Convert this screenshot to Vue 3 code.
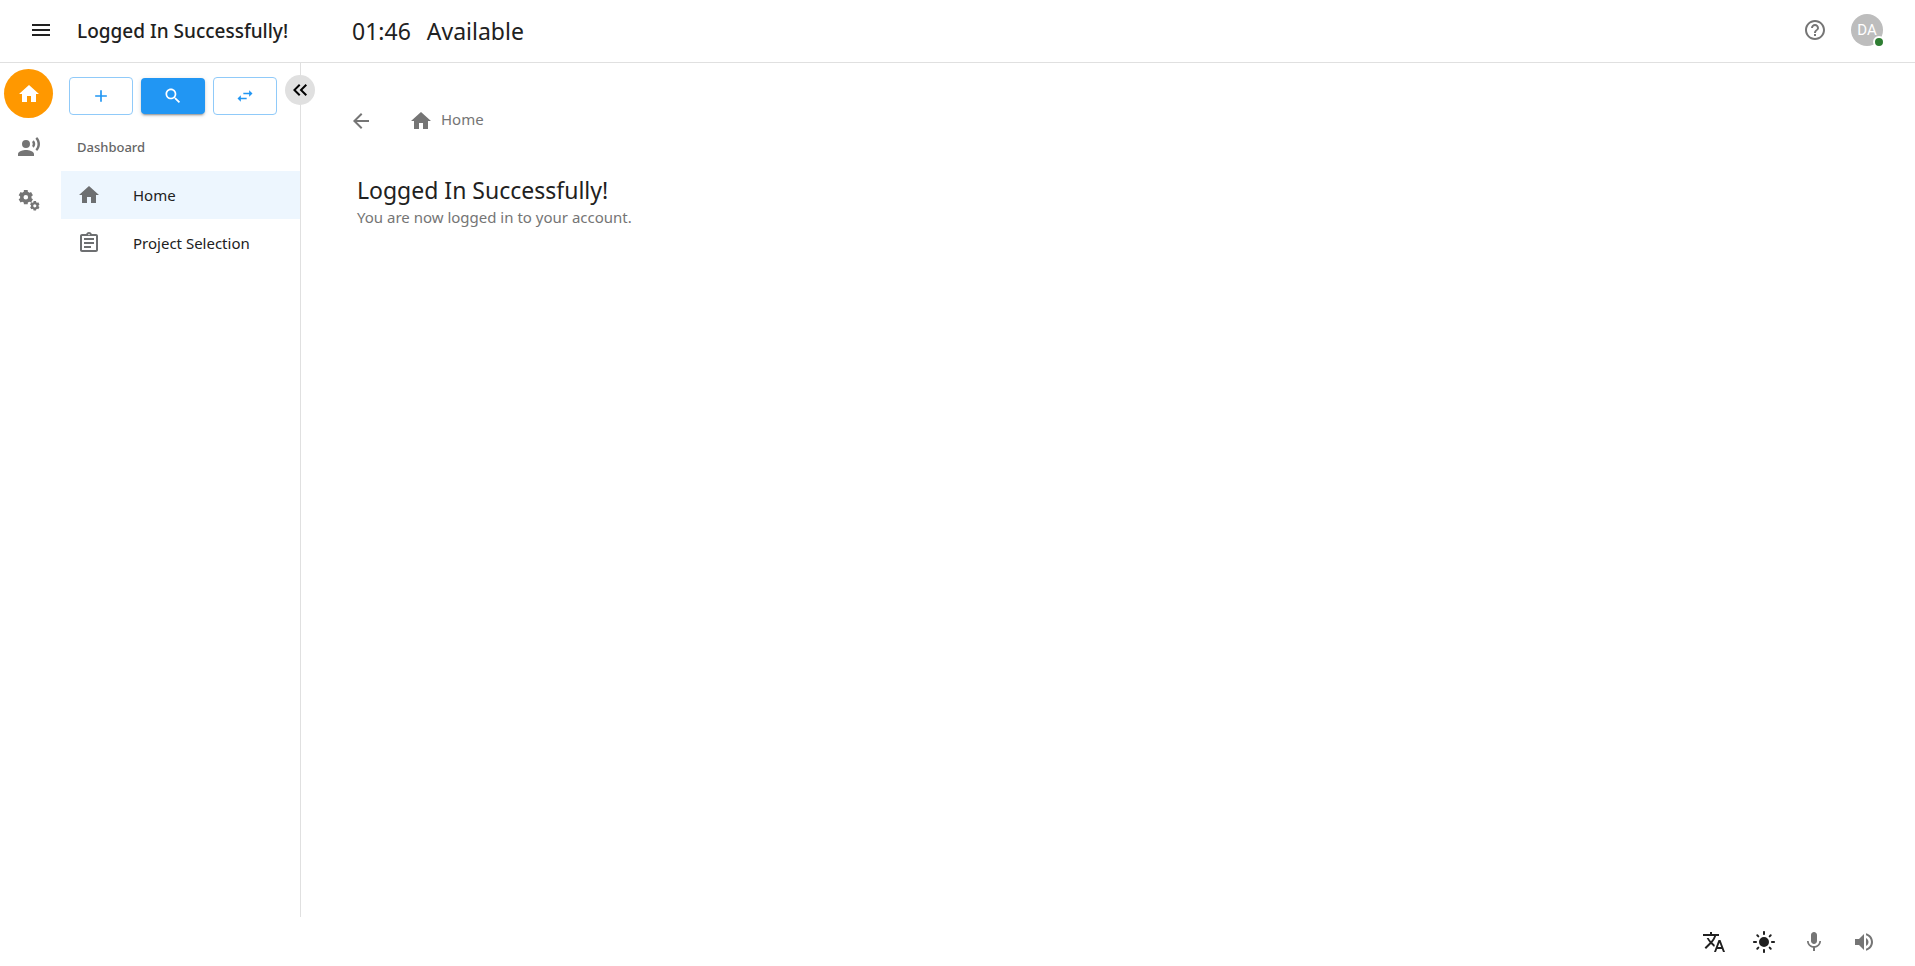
<template>
  <div class="app">
    <header class="topbar">
      <button class="icon-btn" type="button" aria-label="Toggle menu">
        <svg class="icon" viewBox="0 0 24 24"><path :d="icons.menu" /></svg>
      </button>
      <h1 class="title">Logged In Successfully!</h1>
      <div class="status">
        <span>01:46</span>
        <span>Available</span>
      </div>
      <button class="icon-btn muted" type="button" aria-label="Help">
        <svg class="icon" viewBox="0 0 24 24"><path :d="icons.help" /></svg>
      </button>
      <button class="avatar" type="button" aria-label="Account">
        DA
        <span class="badge"></span>
      </button>
    </header>

    <div class="body">
      <nav class="rail">
        <button
          v-for="item in railItems"
          :key="item.label"
          class="rail-btn"
          :class="{ active: activeRail === item.label }"
          type="button"
          :aria-label="item.label"
          @click="activeRail = item.label"
        >
          <svg class="icon" viewBox="0 0 24 24"><path fill-rule="evenodd" :d="icons[item.icon]" /></svg>
        </button>
      </nav>

      <aside class="sidebar">
        <div class="actions">
          <button class="action" type="button" aria-label="Add">
            <svg class="icon small" viewBox="0 0 24 24"><path :d="icons.add" /></svg>
          </button>
          <button class="action contained" type="button" aria-label="Search">
            <svg class="icon small" viewBox="0 0 24 24"><path :d="icons.search" /></svg>
          </button>
          <button class="action" type="button" aria-label="Switch">
            <svg class="icon small" viewBox="0 0 24 24"><path :d="icons.swap" /></svg>
          </button>
        </div>
        <h2 class="group">Dashboard</h2>
        <ul class="menu">
          <li v-for="item in menuItems" :key="item.label">
            <a href="#" class="menu-link" :class="{ selected: item.selected }">
              <svg class="icon" viewBox="0 0 24 24"><path :d="icons[item.icon]" /></svg>
              {{ item.label }}
            </a>
          </li>
        </ul>
        <button class="collapse" type="button" aria-label="Collapse sidebar">
          <svg class="icon" viewBox="0 0 24 24"><path :d="icons.collapse" /></svg>
        </button>
      </aside>

      <main class="content">
        <div class="breadcrumbs">
          <button class="icon-btn muted" type="button" aria-label="Back">
            <svg class="icon" viewBox="0 0 24 24"><path :d="icons.back" /></svg>
          </button>
          <a href="#" class="crumb">
            <svg class="icon" viewBox="0 0 24 24"><path :d="icons.home" /></svg>
            <span>Home</span>
          </a>
        </div>
        <section class="message">
          <h2>Logged In Successfully!</h2>
          <p>You are now logged in to your account.</p>
        </section>
      </main>
    </div>

    <footer class="footer">
      <button
        v-for="item in footerItems"
        :key="item.label"
        class="icon-btn"
        :class="{ muted: item.muted }"
        type="button"
        :aria-label="item.label"
      >
        <svg class="icon" viewBox="0 0 24 24"><path :d="icons[item.icon]" /></svg>
      </button>
    </footer>
  </div>
</template>

<script setup>
import { ref } from 'vue'

const activeRail = ref('Home')

// builds the outline of a gear with a round hole
const gear = (cx, cy, r, hole) => {
  const teeth = 6
  const step = (Math.PI * 2) / teeth
  const points = []
  for (let i = 0; i < teeth; i++) {
    const a = i * step - Math.PI / 2
    const corners = [[-0.36, r * 0.78], [-0.26, r], [0.26, r], [0.36, r * 0.78]]
    corners.forEach(([offset, radius]) => {
      points.push(`${(cx + radius * Math.cos(a + offset)).toFixed(2)} ${(cy + radius * Math.sin(a + offset)).toFixed(2)}`)
    })
  }
  return `M${points.join('L')}Z M${cx - hole} ${cy}a${hole} ${hole} 0 1 0 ${hole * 2} 0a${hole} ${hole} 0 1 0 ${-hole * 2} 0Z`
}

const icons = {
  menu: 'M3 18h18v-2H3v2zm0-5h18v-2H3v2zm0-7v2h18V6H3z',
  help: 'M11 18h2v-2h-2v2zm1-16C6.48 2 2 6.48 2 12s4.48 10 10 10 10-4.48 10-10S17.52 2 12 2zm0 18c-4.41 0-8-3.59-8-8s3.59-8 8-8 8 3.59 8 8-3.59 8-8 8zm0-14c-2.21 0-4 1.79-4 4h2c0-1.1.9-2 2-2s2 .9 2 2c0 2-3 1.75-3 5h2c0-2.25 3-2.5 3-5 0-2.21-1.79-4-4-4z',
  home: 'M10 20v-6h4v6h5v-8h3L12 3 2 12h3v8z',
  voice: 'M9 5a4 4 0 1 0 0 8 4 4 0 0 0 0-8zM9 15c-2.67 0-8 1.34-8 4v2h16v-2c0-2.66-5.33-4-8-4zM16.76 5.36l-1.68 1.69c.84 1.18.84 2.71 0 3.89l1.68 1.69c2.02-2.02 2.02-5.07 0-7.27zM20.07 2l-1.63 1.63c2.77 3.02 2.77 7.56 0 10.74L20.07 16c3.9-3.89 3.91-9.95 0-14z',
  gears: gear(8.8, 9.2, 7.4, 2.3) + gear(17.8, 17.8, 4.9, 1.6),
  add: 'M19 13h-6v6h-2v-6H5v-2h6V5h2v6h6v2z',
  search: 'M15.5 14h-.79l-.28-.27C15.41 12.59 16 11.11 16 9.5 16 5.91 13.09 3 9.5 3S3 5.91 3 9.5 5.91 16 9.5 16c1.61 0 3.09-.59 4.23-1.57l.27.28v.79l5 4.99L20.49 19l-4.99-5zm-6 0C7.01 14 5 11.99 5 9.5S7.01 5 9.5 5 14 7.01 14 9.5 11.99 14 9.5 14z',
  swap: 'M6.99 11 3 15l3.99 4v-3H14v-2H6.99v-3zM21 9l-3.99-4v3H10v2h7.01v3L21 9z',
  collapse: 'M17.59 18 19 16.59 14.42 12 19 7.41 17.59 6l-6 6zM11 18l1.41-1.41L7.83 12l4.58-4.59L11 6l-6 6z',
  project: 'M7 15h7v2H7zm0-4h10v2H7zm0-4h10v2H7zm12-4h-4.18C14.4 1.84 13.3 1 12 1c-1.3 0-2.4.84-2.82 2H5c-1.1 0-2 .9-2 2v14c0 1.1.9 2 2 2h14c1.1 0 2-.9 2-2V5c0-1.1-.9-2-2-2zm-7-.25c.41 0 .75.34.75.75s-.34.75-.75.75-.75-.34-.75-.75.34-.75.75-.75zM19 19H5V5h14v14z',
  back: 'M20 11H7.83l5.59-5.59L12 4l-8 8 8 8 1.41-1.41L7.83 13H20v-2z',
  translate: 'm12.87 15.07-2.54-2.51.03-.03c1.74-1.94 2.98-4.17 3.71-6.53H17V4h-7V2H8v2H1v1.99h11.17C11.5 7.92 10.44 9.75 9 11.35 8.07 10.32 7.3 9.19 6.69 8h-2c.73 1.63 1.73 3.17 2.98 4.56l-5.09 5.02L4 19l5-5 3.11 3.11.76-2.04zM18.5 10h-2L12 22h2l1.12-3h4.75L21 22h2l-4.5-12zm-2.62 7 1.62-4.33L19.12 17h-3.24z',
  sun: 'M12 7a5 5 0 1 0 0 10 5 5 0 0 0 0-10zM2 13h2c.55 0 1-.45 1-1s-.45-1-1-1H2c-.55 0-1 .45-1 1s.45 1 1 1zm18 0h2c.55 0 1-.45 1-1s-.45-1-1-1h-2c-.55 0-1 .45-1 1s.45 1 1 1zM11 2v2c0 .55.45 1 1 1s1-.45 1-1V2c0-.55-.45-1-1-1s-1 .45-1 1zm0 18v2c0 .55.45 1 1 1s1-.45 1-1v-2c0-.55-.45-1-1-1s-1 .45-1 1zM5.99 4.58a.996.996 0 0 0-1.41 1.41l1.06 1.06a.996.996 0 1 0 1.41-1.41L5.99 4.58zm12.37 12.37a.996.996 0 0 0-1.41 1.41l1.06 1.06a.996.996 0 1 0 1.41-1.41l-1.06-1.06zm1.06-10.96a.996.996 0 1 0-1.41-1.41l-1.06 1.06a.996.996 0 1 0 1.41 1.41l1.06-1.06zM7.05 18.36a.996.996 0 1 0-1.41-1.41l-1.06 1.06a.996.996 0 1 0 1.41 1.41l1.06-1.06z',
  mic: 'M12 14c1.66 0 2.99-1.34 2.99-3L15 5c0-1.66-1.34-3-3-3S9 3.34 9 5v6c0 1.66 1.34 3 3 3zm5.3-3c0 3-2.54 5.1-5.3 5.1S6.7 14 6.7 11H5c0 3.41 2.72 6.23 6 6.72V21h2v-3.28c3.28-.48 6-3.3 6-6.72h-1.7z',
  volume: 'M3 9v6h4l5 5V4L7 9H3zm13.5 3c0-1.77-1.02-3.29-2.5-4.03v8.05c1.48-.73 2.5-2.25 2.5-4.02zM14 3.23v2.06c2.89.86 5 3.54 5 6.71s-2.11 5.85-5 6.71v2.06c4.01-.91 7-4.49 7-8.77s-2.99-7.86-7-8.77z'
}

const railItems = [
  { label: 'Home', icon: 'home' },
  { label: 'Voice', icon: 'voice' },
  { label: 'Settings', icon: 'gears' }
]

const menuItems = [
  { label: 'Home', icon: 'home', selected: true },
  { label: 'Project Selection', icon: 'project' }
]

const footerItems = [
  { label: 'Language', icon: 'translate' },
  { label: 'Theme', icon: 'sun' },
  { label: 'Microphone', icon: 'mic', muted: true },
  { label: 'Volume', icon: 'volume', muted: true }
]
</script>

<style>
body {
  margin: 0;
  background: #fff;
}
</style>

<style scoped>
.app {
  display: flex;
  flex-direction: column;
  min-height: 100vh;
  font-family: 'Segoe UI', 'Noto Sans', sans-serif;
  font-size: 15px;
  line-height: 24px;
  color: #212121;
}

h1,
h2,
p,
ul {
  margin: 0;
  padding: 0;
}

button {
  display: flex;
  align-items: center;
  justify-content: center;
  box-sizing: border-box;
  padding: 0;
  border: 0;
  background: none;
  color: inherit;
  font: inherit;
  cursor: pointer;
}

a {
  color: inherit;
  text-decoration: none;
}

.icon {
  display: block;
  flex: none;
  width: 24px;
  height: 24px;
  fill: currentColor;
}

.icon.small {
  width: 20px;
  height: 20px;
}

.muted {
  color: #757575;
}

.topbar {
  display: flex;
  align-items: center;
  height: 60px;
  padding: 0 32px 2px 29px;
  border-bottom: 1px solid #e0e0e0;
}

.title {
  box-sizing: border-box;
  width: 299px;
  padding: 2px 0 0 24px;
  font-size: 19px;
  font-weight: 500;
  white-space: nowrap;
}

.status {
  display: flex;
  flex: 1;
  gap: 16px;
  padding-top: 2px;
  font-size: 23px;
}

.avatar {
  position: relative;
  width: 32px;
  height: 32px;
  margin-left: 24px;
  border-radius: 50%;
  background: #bdbdbd;
  color: #fff;
  font-family: Roboto, sans-serif;
}

.badge {
  position: absolute;
  right: -2px;
  bottom: -2px;
  width: 8px;
  height: 8px;
  border: 2px solid #fff;
  border-radius: 50%;
  background: #2e7d32;
}

.body {
  display: flex;
  flex: 1;
}

.rail {
  display: flex;
  flex-direction: column;
  gap: 4px;
  padding: 6px 8px 0 4px;
}

.rail-btn {
  width: 49px;
  height: 49px;
  border-radius: 50%;
  color: #757575;
}

.rail-btn.active {
  background: #ff9800;
  color: #fff;
}

.sidebar {
  position: relative;
  width: 239px;
  border-right: 1px solid #e0e0e0;
}

.actions {
  display: flex;
  align-items: center;
  gap: 8px;
  padding: 14px 8px 0;
}

.action {
  width: 64px;
  height: 38px;
  border: 1px solid #90caf9;
  border-radius: 4px;
  color: #2196f3;
}

.action.contained {
  height: 36px;
  border: 0;
  background: #2196f3;
  color: #fff;
  box-shadow: 0 3px 1px -2px rgba(0, 0, 0, 0.2), 0 2px 2px rgba(0, 0, 0, 0.14), 0 1px 5px rgba(0, 0, 0, 0.12);
}

.group {
  margin-top: 8px;
  padding: 0 16px;
  color: #666;
  font-size: 13px;
  font-weight: 500;
  line-height: 48px;
}

.menu {
  list-style: none;
}

.menu-link {
  display: flex;
  align-items: center;
  gap: 32px;
  height: 48px;
  padding: 0 16px;
}

.menu-link .icon {
  color: #6d6f71;
}

.menu-link.selected {
  background: #edf6fe;
}

.collapse {
  position: absolute;
  top: 12px;
  right: -15px;
  width: 30px;
  height: 30px;
  border-radius: 50%;
  background: #e0e0e0;
  color: #000;
}

.content {
  flex: 1;
  padding: 46px 48px;
}

.breadcrumbs {
  display: flex;
  align-items: center;
  gap: 36px;
}

.crumb {
  display: flex;
  align-items: center;
  gap: 8px;
  height: 24px;
  color: #757575;
}

.crumb span {
  padding-bottom: 4px;
}

.message {
  padding: 41px 8px 0;
}

.message h2 {
  font-size: 23px;
  font-weight: 400;
  line-height: 32px;
}

.message p {
  color: #757575;
  line-height: 22px;
}

.footer {
  display: flex;
  justify-content: flex-end;
  align-items: center;
  gap: 26px;
  height: 49px;
  padding: 0 39px;
}
</style>
